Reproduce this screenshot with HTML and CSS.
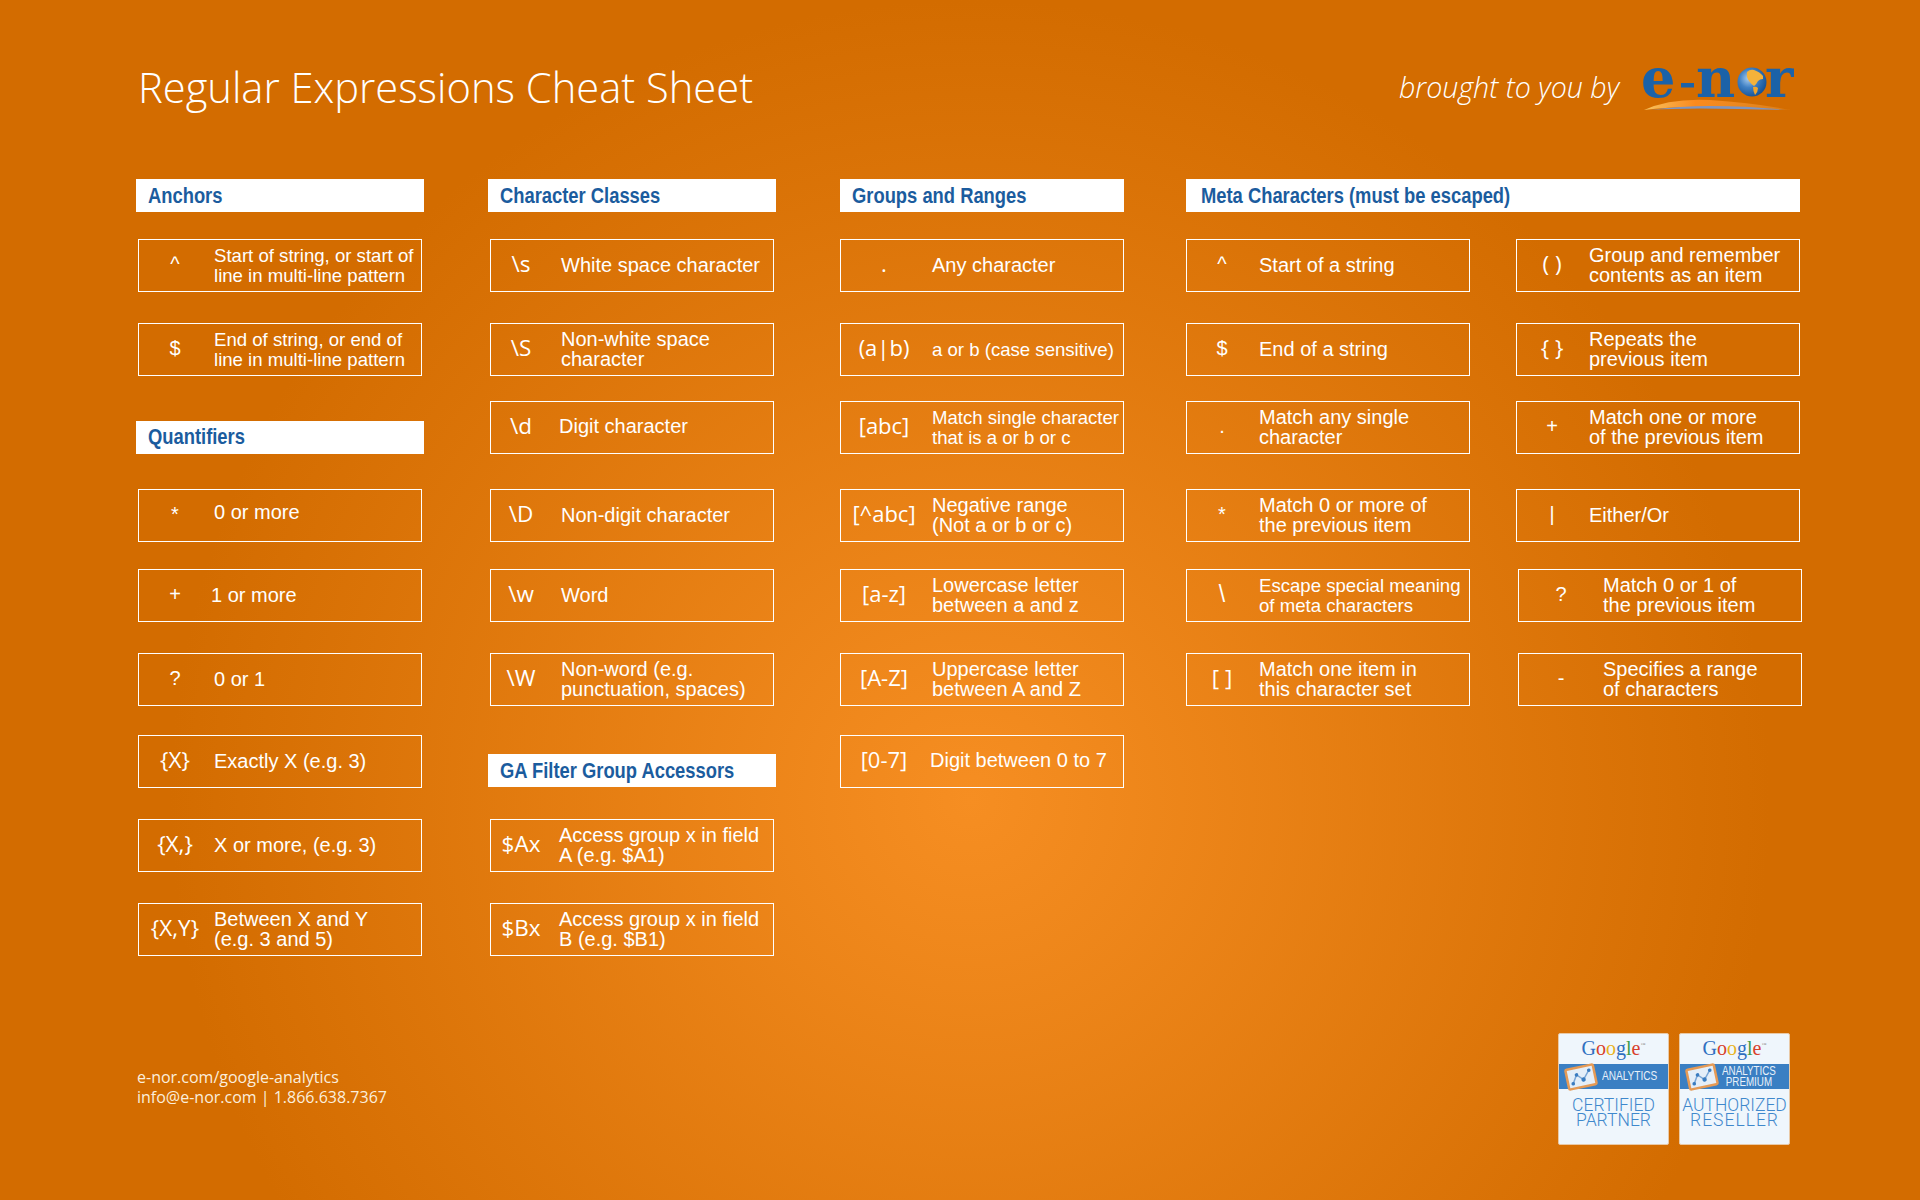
FILE: index.html
```html
<!DOCTYPE html>
<html lang="en">
<head>
<meta charset="utf-8">
<title>Regular Expressions Cheat Sheet</title>
<link rel="stylesheet" href="styles.css">
</head>
<body>
<main class="page">
  <header class="top">
    <h1 class="title">Regular Expressions Cheat Sheet</h1>
    <p class="byline">brought to you by</p>
    <svg class="logo" width="160" height="72" viewBox="0 -20 160 72" role="img" aria-label="e-nor">
      <defs>
        <radialGradient id="globe" cx="0.38" cy="0.38" r="0.7">
          <stop offset="0" stop-color="#a9cdef"/>
          <stop offset="0.45" stop-color="#3f80c4"/>
          <stop offset="1" stop-color="#114d90"/>
        </radialGradient>
        <linearGradient id="sw1" x1="0" x2="1" y1="0" y2="0">
          <stop offset="0" stop-color="#f7c25e"/>
          <stop offset="0.35" stop-color="#fb8a1e"/>
          <stop offset="1" stop-color="#f0a040" stop-opacity="0.3"/>
        </linearGradient>
      </defs>
      <text class="logo-type" x="1" y="33">e</text>
      <rect x="41" y="19" width="13" height="4.5" fill="#1b62a8"/>
      <text class="logo-type" x="56" y="33">n</text>
      <text class="logo-type" x="125" y="33">r</text>
      <circle cx="112" cy="18" r="14.5" fill="url(#globe)"/>
      <path d="M107 8 Q110 5 114 6 Q120 8 123 12 L123 15 Q120 15 118 17 Q116 21 114 22 Q111 20 109 17 Q106 13 107 8Z" fill="#f4b23a"/>
      <path d="M113 23 Q116 22 118 24 Q118 28 115 31 Q113 27 113 23Z" fill="#f0a52c"/>
      <path d="M4 46 Q30 34 70 36 Q115 39 151 46 Q100 43 60 43 Q25 43 4 46Z" fill="url(#sw1)"/>
      <path d="M10 46 Q40 42 70 42 Q110 42 146 46 Q100 45 60 44.500 Q30 44.500 10 46Z" fill="#7f95c0"/>
    </svg>
  </header>

  <section class="sheet">
    <div class="col c1">
      <h2 class="head"><span class="head-t">Anchors</span></h2>
      <div class="box"><span class="sym op">^</span><span class="txt tight">Start of string, or start of<br>line in multi-line pattern</span></div>
      <div class="box"><span class="sym op">$</span><span class="txt tight">End of string, or end of<br>line in multi-line pattern</span></div>
      <h2 class="head mid"><span class="head-t">Quantifiers</span></h2>
      <div class="box"><span class="sym op">*</span><span class="txt lift">0 or more</span></div>
      <div class="box"><span class="sym op">+</span><span class="txt back">1 or more</span></div>
      <div class="box"><span class="sym op">?</span><span class="txt">0 or 1</span></div>
      <div class="box"><span class="sym">{X}</span><span class="txt">Exactly X (e.g. 3)</span></div>
      <div class="box"><span class="sym">{X,}</span><span class="txt">X or more, (e.g. 3)</span></div>
      <div class="box"><span class="sym">{X,Y}</span><span class="txt">Between X and Y<br>(e.g. 3 and 5)</span></div>
    </div>

    <div class="col c2">
      <h2 class="head"><span class="head-t">Character Classes</span></h2>
      <div class="box"><span class="sym">\s</span><span class="txt">White space character</span></div>
      <div class="box"><span class="sym">\S</span><span class="txt">Non-white space<br>character</span></div>
      <div class="box"><span class="sym">\d</span><span class="txt lift-sm nudge">Digit character</span></div>
      <div class="box"><span class="sym">\D</span><span class="txt">Non-digit character</span></div>
      <div class="box"><span class="sym">\w</span><span class="txt">Word</span></div>
      <div class="box"><span class="sym">\W</span><span class="txt">Non-word (e.g.<br>punctuation, spaces)</span></div>
      <h2 class="head mid-ga"><span class="head-t">GA Filter Group Accessors</span></h2>
      <div class="box"><span class="sym">$Ax</span><span class="txt nudge">Access group x in field<br>A (e.g. $A1)</span></div>
      <div class="box"><span class="sym">$Bx</span><span class="txt nudge">Access group x in field<br>B (e.g. $B1)</span></div>
    </div>

    <div class="col c3">
      <h2 class="head"><span class="head-t">Groups and Ranges</span></h2>
      <div class="box"><span class="sym">.</span><span class="txt">Any character</span></div>
      <div class="box"><span class="sym">(a|b)</span><span class="txt tight">a or b (case sensitive)</span></div>
      <div class="box"><span class="sym">[abc]</span><span class="txt tight">Match single character<br>that is a or b or c</span></div>
      <div class="box"><span class="sym">[^abc]</span><span class="txt">Negative range<br>(Not a or b or c)</span></div>
      <div class="box"><span class="sym">[a-z]</span><span class="txt">Lowercase letter<br>between a and z</span></div>
      <div class="box"><span class="sym">[A-Z]</span><span class="txt">Uppercase letter<br>between A and Z</span></div>
      <div class="box"><span class="sym">[0-7]</span><span class="txt nudge lift-sm">Digit between 0 to 7</span></div>
    </div>

    <div class="col meta">
      <h2 class="head span"><span class="head-t">Meta Characters (must be escaped)</span></h2>
      <div class="box"><span class="sym op">^</span><span class="txt">Start of a string</span></div>
      <div class="box"><span class="sym">( )</span><span class="txt">Group and remember<br>contents as an item</span></div>
      <div class="box"><span class="sym op">$</span><span class="txt">End of a string</span></div>
      <div class="box"><span class="sym">{ }</span><span class="txt">Repeats the<br>previous item</span></div>
      <div class="box"><span class="sym op">.</span><span class="txt">Match any single<br>character</span></div>
      <div class="box"><span class="sym op">+</span><span class="txt">Match one or more<br>of the previous item</span></div>
      <div class="box"><span class="sym op">*</span><span class="txt">Match 0 or more of<br>the previous item</span></div>
      <div class="box"><span class="sym pipe">|</span><span class="txt">Either/Or</span></div>
      <div class="box"><span class="sym op big">\</span><span class="txt tight">Escape special meaning<br>of meta characters</span></div>
      <div class="box shift"><span class="sym op">?</span><span class="txt">Match 0 or 1 of<br>the previous item</span></div>
      <div class="box"><span class="sym">[ ]</span><span class="txt">Match one item in<br>this character set</span></div>
      <div class="box shift"><span class="sym op">-</span><span class="txt">Specifies a range<br>of characters</span></div>
    </div>
  </section>

  <footer class="foot">
    <p class="contact">e-nor.com/google-analytics<br>info@e-nor.com | 1.866.638.7367</p>
    <div class="badges">
      <div class="badge">
        <p class="google"><span class="gb">G</span><span class="gr">o</span><span class="gy">o</span><span class="gb">g</span><span class="gg">l</span><span class="gr">e</span><sup class="tm">™</sup></p>
        <div class="band">
          <svg class="ga-icon" width="34" height="28" viewBox="0 0 34 28" aria-hidden="true">
            <g transform="rotate(-12 17 14)">
              <rect x="3" y="4" width="28" height="20" rx="1.5" fill="#e4eef8" stroke="#e59a55" stroke-width="2.5"/>
              <path d="M8 19 L13 11 L19 17 L26 9" fill="none" stroke="#7aa6d6" stroke-width="1.5"/>
              <circle cx="8" cy="19" r="1.800" fill="#3a7cc0"/><circle cx="13" cy="11" r="1.800" fill="#3a7cc0"/>
              <circle cx="19" cy="17" r="2.200" fill="#3a7cc0"/><circle cx="26" cy="9" r="1.800" fill="#3a7cc0"/>
            </g>
          </svg>
          <span class="band-txt">ANALYTICS</span>
        </div>
        <p class="cert">CERTIFIED<br>PARTNER</p>
      </div>
      <div class="badge">
        <p class="google"><span class="gb">G</span><span class="gr">o</span><span class="gy">o</span><span class="gb">g</span><span class="gg">l</span><span class="gr">e</span><sup class="tm">™</sup></p>
        <div class="band">
          <svg class="ga-icon" width="34" height="28" viewBox="0 0 34 28" aria-hidden="true">
            <g transform="rotate(-12 17 14)">
              <rect x="3" y="4" width="28" height="20" rx="1.5" fill="#e4eef8" stroke="#e59a55" stroke-width="2.5"/>
              <path d="M8 19 L13 11 L19 17 L26 9" fill="none" stroke="#7aa6d6" stroke-width="1.5"/>
              <circle cx="8" cy="19" r="1.800" fill="#3a7cc0"/><circle cx="13" cy="11" r="1.800" fill="#3a7cc0"/>
              <circle cx="19" cy="17" r="2.200" fill="#3a7cc0"/><circle cx="26" cy="9" r="1.800" fill="#3a7cc0"/>
            </g>
          </svg>
          <span class="band-txt two">ANALYTICS<br>PREMIUM</span>
        </div>
        <p class="cert">AUTHORIZED<br><span class="spaced">RESELLER</span></p>
      </div>
    </div>
  </footer>
</main>
</body>
</html>
```

FILE: styles.css
```css
* { box-sizing: border-box; }
html, body { margin: 0; padding: 0; }
body {
  width: 1920px;
  height: 1200px;
  overflow: hidden;
  color: #fff;
  font-family: "Liberation Sans", Arial, sans-serif;
  background: #d36c00 radial-gradient(circle 800px at 970px 800px, #f68e22 0%, #d36c00 100%);
}
p, h1, h2 { margin: 0; font-weight: normal; }

.page { display: flex; flex-direction: column; width: 1920px; height: 1200px; padding-left: 138px; }

/* header */
.top { display: flex; align-items: flex-start; height: 179px; padding-top: 60px; }
.title { font: 300 41.700px/54px "Open Sans", sans-serif; flex: 1; }
.byline { font: italic 300 28.600px/38px "Open Sans", sans-serif; margin-top: 8px; }
.logo { margin: -16px 120px 0 21px; flex: none; }
.logo-type { font: bold 54px "DejaVu Serif", serif; fill: #1b62a8; }

/* sheet */
.sheet { display: flex; --rows: 60px 84px 78px 88px 80px 84px 82px 84px 84px 53px; }
.col { display: grid; grid-template-columns: 284px; grid-template-rows: var(--rows); width: 284px; flex: none; }
.c1 { --sym: 72px; --gap: 3px; margin-right: 68px; }
.c2 { --sym: 60px; --gap: 10px; margin-right: 66px; }
.c3 { --sym: 86px; --gap: 5px; --lift: 6px; margin-right: 62px; }
.meta { --sym: 70px; --gap: 2px; width: 616px; grid-template-columns: 284px 284px; column-gap: 46px; grid-template-rows: 60px 84px 78px 88px 80px 84px; }

.head {
  align-self: start;
  min-width: 0;
  height: 33px;
  margin: 0 -2px;
  padding-left: 12px;
  background: #fff;
  color: #1b5c9e;
  font: bold 22.400px/33px "Liberation Sans", sans-serif;
  white-space: nowrap;
  overflow: hidden;
}
.head-t { display: inline-block; transform: scaleX(0.82); transform-origin: left center; }
.c3 .head { margin: 0; padding-left: 12px; }
.head.span { grid-column: 1 / span 2; margin: 0; padding-left: 15px; }
.head.mid { margin-top: 20px; line-height: 31px; }
.head.mid-ga { margin-top: 19px; }

.box {
  display: flex;
  align-items: center;
  align-self: start;
  width: 284px;
  height: 53px;
  border: 1px solid #fff;
  font-size: 20px;
  line-height: 20px;
}
.box.shift { --sym: 84px; --gap: 0px; margin-left: 2px; }
.sym { flex: none; width: var(--sym); margin-bottom: var(--lift, 4px); text-align: center; font: 400 22.500px/26px "Open Sans", sans-serif; white-space: nowrap; }
.c3 .sym { font-size: 22px; }
.sym.op { margin-bottom: 3px; font: 400 20px/26px "Liberation Sans", sans-serif; }
.sym.op.big { font-size: 23px; }
.sym.pipe { margin-bottom: 4px; font: 400 15px/20px "Liberation Sans", sans-serif; transform: scale(1.3); }
.txt { margin-left: var(--gap); margin-bottom: 2px; white-space: nowrap; }
.tight { margin-bottom: 0; font-size: 18.600px; }
.lift { margin-bottom: 8px; }
.back { margin-left: 0; }
.nudge { margin-left: calc(var(--gap) - 2px); margin-bottom: 1px; }
.lift-sm.nudge { margin-bottom: 4px; }

/* footer */
.foot { display: flex; justify-content: space-between; margin-top: 77px; padding-right: 130px; }
.contact { margin: 35px 0 0 -1px; font: 400 16px/19.500px "Open Sans", sans-serif; color: #fbeedd; }
.badges { display: flex; gap: 10px; }
.badge {
  display: flex;
  flex-direction: column;
  width: 111px;
  height: 112px;
  background: #eff6fc;
  border: 1px solid #e9c9a6;
  border-radius: 2px;
  text-align: center;
}
.google { height: 30px; font: 20px/28px "Liberation Serif", serif; }
.gb { color: #2f6fc0; } .gr { color: #d8402c; } .gy { color: #e9b21c; } .gg { color: #3e9c4a; }
.tm { font-size: 5px; color: #888; vertical-align: 9px; line-height: 0; }
.band { display: flex; align-items: center; height: 25px; background: #3a7fc3; padding-left: 5px; }
.ga-icon { flex: none; }
.band-txt { margin-left: 4px; color: #e8f1fa; text-align: left; white-space: nowrap; font: 12.600px/11px "Liberation Sans", sans-serif; transform: scaleX(0.8); transform-origin: left center; }
.band-txt.two { margin-left: 3px; text-align: center; transform: scaleX(0.78); }
.cert { margin-top: 9px; color: #3f88cc; font: 300 17.500px/15px Roboto, sans-serif; }
.spaced { letter-spacing: 1px; }
```
